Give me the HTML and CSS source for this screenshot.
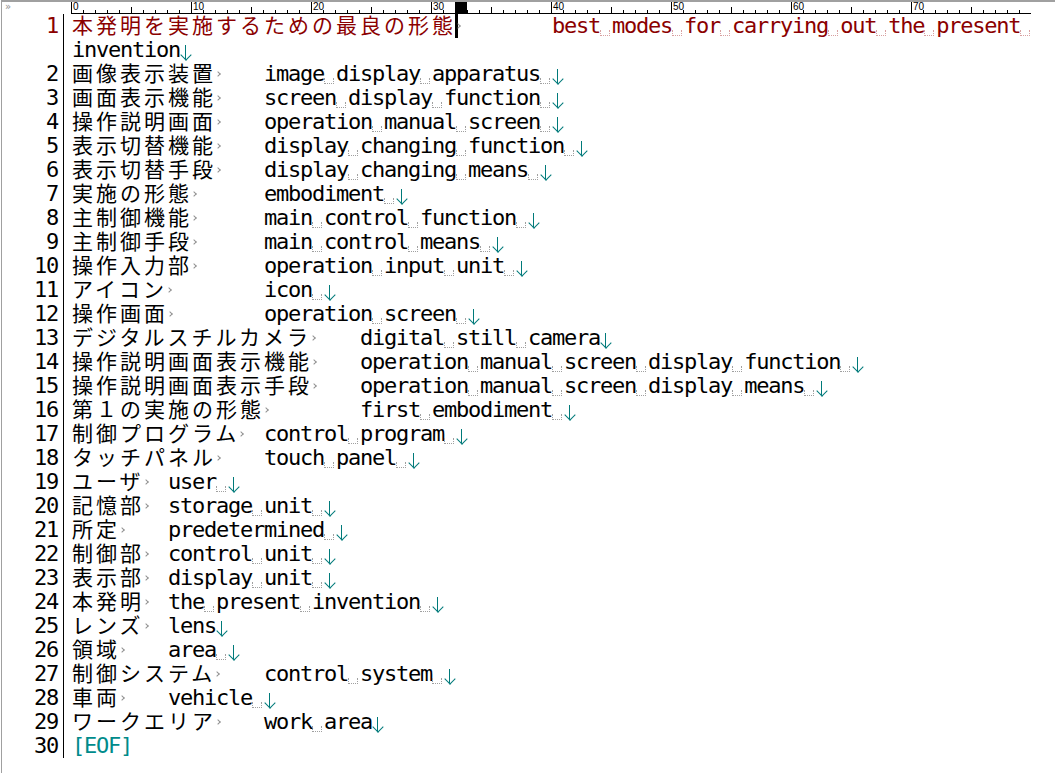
FILE: index.html
```html
<!DOCTYPE html>
<html lang="ja">
<head>
<meta charset="utf-8">
<title>Editor</title>
<link rel="stylesheet" href="styles.css">
</head>
<body>
<div class="window">
  <div class="topbar">
    <div class="corner">»</div>
    <div class="ruler">
      <span class="seg">0</span><span class="seg">10</span><span class="seg">20</span><span class="seg">30</span><span class="seg">40</span><span class="seg">50</span><span class="seg">60</span><span class="seg">70</span>
      <span class="rcur"></span>
    </div>
  </div>
  <div class="editor">
    <div class="gutter">
      <div class="ln cur">1</div>
      <div class="ln"></div>
      <div class="ln">2</div>
      <div class="ln">3</div>
      <div class="ln">4</div>
      <div class="ln">5</div>
      <div class="ln">6</div>
      <div class="ln">7</div>
      <div class="ln">8</div>
      <div class="ln">9</div>
      <div class="ln">10</div>
      <div class="ln">11</div>
      <div class="ln">12</div>
      <div class="ln">13</div>
      <div class="ln">14</div>
      <div class="ln">15</div>
      <div class="ln">16</div>
      <div class="ln">17</div>
      <div class="ln">18</div>
      <div class="ln">19</div>
      <div class="ln">20</div>
      <div class="ln">21</div>
      <div class="ln">22</div>
      <div class="ln">23</div>
      <div class="ln">24</div>
      <div class="ln">25</div>
      <div class="ln">26</div>
      <div class="ln">27</div>
      <div class="ln">28</div>
      <div class="ln">29</div>
      <div class="ln">30</div>
    </div>
    <div class="text">
      <div class="row cur"><span class="j">本発明を実施するための最良の形態</span><span class="caret"></span><span class="tab">&#9;</span>best<span class="sp"> </span>modes<span class="sp"> </span>for<span class="sp"> </span>carrying<span class="sp"> </span>out<span class="sp"> </span>the<span class="sp"> </span>present<span class="sp"> </span></div>
      <div class="row">invention<span class="nl"></span></div>
      <div class="row"><span class="j">画像表示装置</span><span class="tab">&#9;</span>image<span class="sp"> </span>display<span class="sp"> </span>apparatus<span class="sp"> </span><span class="nl"></span></div>
      <div class="row"><span class="j">画面表示機能</span><span class="tab">&#9;</span>screen<span class="sp"> </span>display<span class="sp"> </span>function<span class="sp"> </span><span class="nl"></span></div>
      <div class="row"><span class="j">操作説明画面</span><span class="tab">&#9;</span>operation<span class="sp"> </span>manual<span class="sp"> </span>screen<span class="sp"> </span><span class="nl"></span></div>
      <div class="row"><span class="j">表示切替機能</span><span class="tab">&#9;</span>display<span class="sp"> </span>changing<span class="sp"> </span>function<span class="sp"> </span><span class="nl"></span></div>
      <div class="row"><span class="j">表示切替手段</span><span class="tab">&#9;</span>display<span class="sp"> </span>changing<span class="sp"> </span>means<span class="sp"> </span><span class="nl"></span></div>
      <div class="row"><span class="j">実施の形態</span><span class="tab">&#9;</span>embodiment<span class="sp"> </span><span class="nl"></span></div>
      <div class="row"><span class="j">主制御機能</span><span class="tab">&#9;</span>main<span class="sp"> </span>control<span class="sp"> </span>function<span class="sp"> </span><span class="nl"></span></div>
      <div class="row"><span class="j">主制御手段</span><span class="tab">&#9;</span>main<span class="sp"> </span>control<span class="sp"> </span>means<span class="sp"> </span><span class="nl"></span></div>
      <div class="row"><span class="j">操作入力部</span><span class="tab">&#9;</span>operation<span class="sp"> </span>input<span class="sp"> </span>unit<span class="sp"> </span><span class="nl"></span></div>
      <div class="row"><span class="j">アイコン</span><span class="tab">&#9;</span>icon<span class="sp"> </span><span class="nl"></span></div>
      <div class="row"><span class="j">操作画面</span><span class="tab">&#9;</span>operation<span class="sp"> </span>screen<span class="sp"> </span><span class="nl"></span></div>
      <div class="row"><span class="j">デジタルスチルカメラ</span><span class="tab">&#9;</span>digital<span class="sp"> </span>still<span class="sp"> </span>camera<span class="nl"></span></div>
      <div class="row"><span class="j">操作説明画面表示機能</span><span class="tab">&#9;</span>operation<span class="sp"> </span>manual<span class="sp"> </span>screen<span class="sp"> </span>display<span class="sp"> </span>function<span class="sp"> </span><span class="nl"></span></div>
      <div class="row"><span class="j">操作説明画面表示手段</span><span class="tab">&#9;</span>operation<span class="sp"> </span>manual<span class="sp"> </span>screen<span class="sp"> </span>display<span class="sp"> </span>means<span class="sp"> </span><span class="nl"></span></div>
      <div class="row"><span class="j">第１の実施の形態</span><span class="tab">&#9;</span>first<span class="sp"> </span>embodiment<span class="sp"> </span><span class="nl"></span></div>
      <div class="row"><span class="j">制御プログラム</span><span class="tab">&#9;</span>control<span class="sp"> </span>program<span class="sp"> </span><span class="nl"></span></div>
      <div class="row"><span class="j">タッチパネル</span><span class="tab">&#9;</span>touch<span class="sp"> </span>panel<span class="sp"> </span><span class="nl"></span></div>
      <div class="row"><span class="j">ユーザ</span><span class="tab">&#9;</span>user<span class="sp"> </span><span class="nl"></span></div>
      <div class="row"><span class="j">記憶部</span><span class="tab">&#9;</span>storage<span class="sp"> </span>unit<span class="sp"> </span><span class="nl"></span></div>
      <div class="row"><span class="j">所定</span><span class="tab">&#9;</span>predetermined<span class="sp"> </span><span class="nl"></span></div>
      <div class="row"><span class="j">制御部</span><span class="tab">&#9;</span>control<span class="sp"> </span>unit<span class="sp"> </span><span class="nl"></span></div>
      <div class="row"><span class="j">表示部</span><span class="tab">&#9;</span>display<span class="sp"> </span>unit<span class="sp"> </span><span class="nl"></span></div>
      <div class="row"><span class="j">本発明</span><span class="tab">&#9;</span>the<span class="sp"> </span>present<span class="sp"> </span>invention<span class="sp"> </span><span class="nl"></span></div>
      <div class="row"><span class="j">レンズ</span><span class="tab">&#9;</span>lens<span class="nl"></span></div>
      <div class="row"><span class="j">領域</span><span class="tab">&#9;</span>area<span class="sp"> </span><span class="nl"></span></div>
      <div class="row"><span class="j">制御システム</span><span class="tab">&#9;</span>control<span class="sp"> </span>system<span class="sp"> </span><span class="nl"></span></div>
      <div class="row"><span class="j">車両</span><span class="tab">&#9;</span>vehicle<span class="sp"> </span><span class="nl"></span></div>
      <div class="row"><span class="j">ワークエリア</span><span class="tab">&#9;</span>work<span class="sp"> </span>area<span class="nl"></span></div>
      <div class="row"><span class="eof">[EOF]</span></div>
    </div>
  </div>
</div>
</body>
</html>
```

FILE: styles.css
```css
html, body {
  margin: 0;
  background: #fff;
}

.window {
  margin-left: 1px;
  border-left: 1px solid #a0a0a0;
  border-top: 2px solid #a0a0a0;
  height: 771px;
  overflow: hidden;
}

.topbar {
  display: flex;
  height: 12px;
}

.corner {
  width: 69px;
  flex-shrink: 0;
  box-sizing: border-box;
  padding-left: 3px;
  font: 10px/10px "DejaVu Sans", sans-serif;
  color: #909090;
}

.ruler {
  position: relative;
  display: flex;
  flex-shrink: 0;
  width: 960px;
  height: 11px;
  overflow: hidden;
  border-bottom: 1px solid #000;
  background:
    repeating-linear-gradient(to right, #000 0 1px, transparent 1px 120px) 0 0 / 100% 11px no-repeat,
    repeating-linear-gradient(to right, #000 0 1px, transparent 1px 60px) 0 100% / 100% 6px no-repeat,
    repeating-linear-gradient(to right, #000 0 1px, transparent 1px 12px) 0 100% / 100% 3px no-repeat;
}

.seg {
  width: 120px;
  height: 10px;
  flex-shrink: 0;
  box-sizing: border-box;
  padding-left: 2px;
  padding-top: 1px;
  font: 10px/8px "Liberation Sans", sans-serif;
  color: #000;
}

.rcur {
  position: absolute;
  left: 384px;
  top: 0;
  width: 12px;
  height: 11px;
  background: #000;
}

.editor {
  display: flex;
  align-items: flex-start;
}

.gutter,
.text {
  font-family: "DejaVu Sans Mono", monospace;
  font-size: 22px;
  letter-spacing: -1.245px;
  color: #000;
}

.gutter {
  width: 62px;
  flex-shrink: 0;
  box-sizing: border-box;
  padding-right: 5px;
  border-right: 1px solid #000;
}

.ln {
  height: 24px;
  line-height: 24px;
  text-align: right;
}

.text {
  margin-left: 8px;
}

.row {
  height: 24px;
  line-height: 24px;
  white-space: pre;
  tab-size: 96px;
}

.cur {
  color: #8b0000;
}

.j {
  font-family: "Noto Sans CJK JP", sans-serif;
  font-size: 21px;
  letter-spacing: 3px;
  line-height: 20px;
}

.tab {
  position: relative;
  letter-spacing: 0;
}

.tab::before {
  content: "";
  position: absolute;
  left: 0;
  top: 11px;
  width: 3px;
  height: 3px;
  border-top: 1px solid #909090;
  border-right: 1px solid #909090;
  transform: rotate(45deg);
}

.sp {
  position: relative;
}

.sp::after {
  content: "";
  position: absolute;
  left: 0;
  top: 17px;
  width: 8px;
  height: 5px;
  border: 1px dotted #a0a0a0;
  border-top: 0;
}

.cur .sp::after {
  border-color: #d8a0a0;
}

.caret {
  position: relative;
}

.caret::before {
  content: "";
  position: absolute;
  left: -1px;
  top: 0;
  width: 3px;
  height: 25px;
  background: #000;
}

.nl {
  display: inline-block;
  position: relative;
  width: 12px;
  height: 24px;
  vertical-align: top;
}

.nl::before {
  content: "";
  position: absolute;
  left: 5px;
  top: 7px;
  width: 1px;
  height: 14px;
  background: #007a7a;
}

.nl::after {
  content: "";
  position: absolute;
  left: 1.5px;
  top: 12.5px;
  width: 7px;
  height: 7px;
  border-right: 1px solid #007a7a;
  border-bottom: 1px solid #007a7a;
  transform: rotate(45deg);
}

.eof {
  color: #008b8b;
}
```
